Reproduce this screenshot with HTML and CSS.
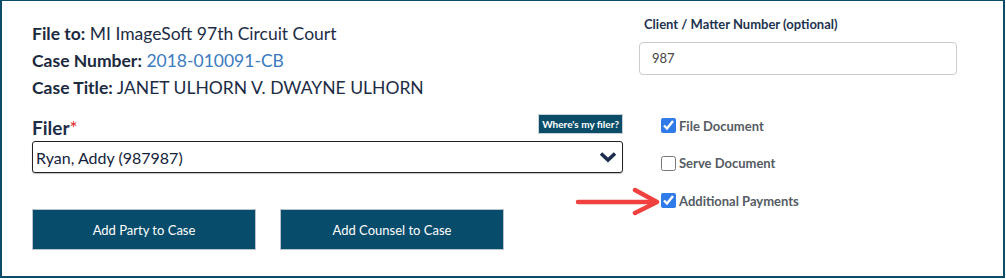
FILE: index.html
```html
<!DOCTYPE html>
<html>
<head>
<meta charset="utf-8">
<link rel="stylesheet" href="styles.css">
</head>
<body>
<div class="frame">
  <div class="left">
    <div class="info">
      <div><b>File to:</b> MI ImageSoft 97th Circuit Court</div>
      <div><b>Case Number:</b> <span class="link">2018-010091-CB</span></div>
      <div><b>Case Title:</b> JANET ULHORN V. DWAYNE ULHORN</div>
    </div>
    <div class="filer-head">
      <span class="filer-label">Filer<span class="req">*</span></span>
      <span class="where">Where's my filer?</span>
    </div>
    <div class="select">
      <span>Ryan, Addy (987987)</span>
      <svg class="chev" width="18" height="12" viewBox="0 0 18 12"><path d="M2 2.5 L9 9 L16 2.5" fill="none" stroke="#1b2f4c" stroke-width="3.6" stroke-linecap="butt" stroke-linejoin="miter"/></svg>
    </div>
    <div class="buttons">
      <div class="btn">Add Party to Case</div>
      <div class="btn">Add Counsel to Case</div>
    </div>
  </div>
  <div class="right">
    <div class="cm-label">Client / Matter Number (optional)</div>
    <div class="cm-input">987</div>
    <div class="checks">
      <label class="check"><input type="checkbox" checked><span>File Document</span></label>
      <label class="check"><input type="checkbox"><span>Serve Document</span></label>
      <label class="check"><input type="checkbox" checked><span>Additional Payments</span></label>
    </div>
  </div>
  <svg class="arrow" width="90" height="30" viewBox="0 0 90 30">
    <path d="M3 15 L80 15" stroke="#f0413f" stroke-width="4.5" stroke-linecap="round" fill="none"/>
    <path d="M60 3 L82 15 L60 26" stroke="#f0413f" stroke-width="4.5" stroke-linecap="round" stroke-linejoin="round" fill="none"/>
  </svg>
</div>
</body>
</html>
```
FILE: styles.css
```css
html, body {
  margin: 0;
  padding: 0;
  background: #ffffff;
}
body {
  font-family: Lato, "Open Sans", sans-serif;
  color: #1c2b40;
}
.frame {
  position: relative;
  box-sizing: border-box;
  width: 1005px;
  height: 278px;
  border: 2px solid #0b4d69;
  border-top-width: 1px;
  display: flex;
  padding: 0 0 0 30px;
}
.left {
  width: 591px;
  padding-top: 19px;
}
.info {
  font-size: 17.5px;
  line-height: 27px;
  color: #1d2c45;
}
.info b {
  font-weight: 700;
  color: #1b2a3e;
}
.link {
  color: #3b7bbf;
}
.filer-head {
  margin-top: 14px;
  height: 26px;
  display: flex;
  justify-content: space-between;
  align-items: flex-start;
}
.filer-label {
  font-size: 19px;
  font-weight: 700;
  line-height: 26px;
  color: #1d2d47;
}
.req {
  color: #e0272b;
  font-weight: 400;
}
.where {
  margin-top: -1px;
  background: #0b4d69;
  color: #ffffff;
  font-size: 10px;
  font-weight: 700;
  line-height: 18px;
  padding: 0 3px;
  border: 1px solid #c9d2d8;
}
.select {
  box-sizing: border-box;
  height: 32px;
  border: 1px solid #222;
  border-radius: 3px;
  display: flex;
  align-items: center;
  justify-content: space-between;
  padding: 0 5px 0 3px;
  font-size: 16px;
  color: #14233a;
  box-shadow: 0 1px 1px rgba(0,0,0,0.25);
}
.buttons {
  margin-top: 36px;
  display: flex;
  gap: 24px;
}
.btn {
  box-sizing: border-box;
  width: 224px;
  height: 41px;
  background: #084c6b;
  border: 1px solid #b9c3c9;
  color: #ffffff;
  font-size: 13px;
  display: flex;
  align-items: center;
  justify-content: center;
}
.right {
  margin-left: 16px;
  width: 318px;
  padding-top: 14px;
}
.cm-label {
  padding-left: 5px;
  font-size: 13px;
  font-weight: 700;
  line-height: 19px;
  color: #1e3350;
}
.cm-input {
  margin-top: 8px;
  box-sizing: border-box;
  height: 33px;
  border: 1px solid #cccccc;
  border-radius: 4px;
  padding-left: 12px;
  font-size: 13px;
  line-height: 31px;
  color: #444;
}
.checks {
  margin-top: 32px;
  padding-left: 22px;
}
.check {
  display: flex;
  align-items: center;
  height: 37.5px;
  font-size: 13px;
  font-weight: 700;
  color: #555b63;
}
.check input {
  margin: 0 3px 0 0;
  width: 15px;
  height: 15px;
  accent-color: #2f7bea;
}
.arrow {
  position: absolute;
  left: 573px;
  top: 186px;
}
```
